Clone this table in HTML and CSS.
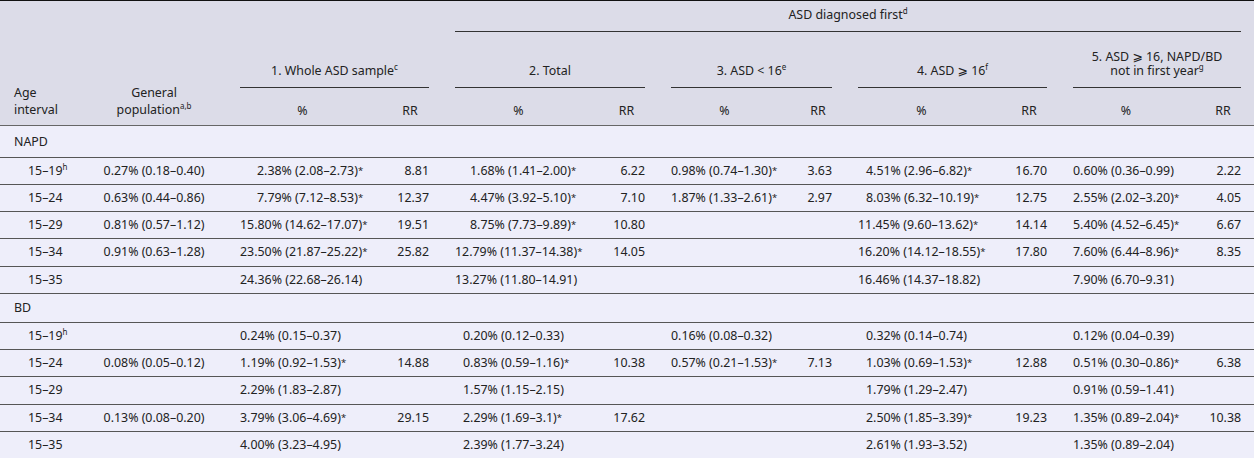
FILE: index.html
```html
<!DOCTYPE html>
<html lang="en">
<head>
<meta charset="utf-8">
<title>Risk of NAPD and BD by age interval</title>
<link rel="stylesheet" href="styles.css">
</head>
<body>
<table class="tbl">
  <colgroup>
    <col class="w-age"><col class="w-gen">
    <col class="w-c1p"><col class="w-c1r">
    <col class="w-c2p"><col class="w-c2r">
    <col class="w-c3p"><col class="w-c3r">
    <col class="w-c4p"><col class="w-c4r">
    <col class="w-c5p"><col class="w-c5r">
  </colgroup>
  <thead>
    <tr class="h1">
      <th class="stub left" rowspan="3">Age<br>interval</th>
      <th class="stub" rowspan="3">General<br>population<sup>a,b</sup></th>
      <th colspan="2"></th>
      <th class="grp" colspan="8"><div class="rule">ASD diagnosed first<sup>d</sup></div></th>
    </tr>
    <tr class="h2">
      <th class="grp" colspan="2"><div class="rule">1. Whole ASD sample<sup>c</sup></div></th>
      <th class="grp" colspan="2"><div class="rule">2. Total</div></th>
      <th class="grp" colspan="2"><div class="rule">3. ASD &lt; 16<sup>e</sup></div></th>
      <th class="grp" colspan="2"><div class="rule">4. ASD ⩾ 16<sup>f</sup></div></th>
      <th class="grp" colspan="2"><div class="rule">5. ASD ⩾ 16, NAPD/BD<br>not in first year<sup>g</sup></div></th>
    </tr>
    <tr class="h3">
      <th class="sub">%</th><th class="sub">RR</th>
      <th class="sub">%</th><th class="sub">RR</th>
      <th class="sub">%</th><th class="sub">RR</th>
      <th class="sub">%</th><th class="sub">RR</th>
      <th class="sub">%</th><th class="sub">RR</th>
    </tr>
  </thead>
  <tbody>
    <tr class="sec sec-first"><td colspan="12">NAPD</td></tr>
    <tr>
      <td class="age">15–19<sup>h</sup></td><td class="gen">0.27% (0.18–0.40)</td>
      <td class="pct s2">2.38% (2.08–2.73)<span class="ast">*</span></td><td class="rr">8.81</td>
      <td class="pct s2b">1.68% (1.41–2.00)<span class="ast">*</span></td><td class="rr">6.22</td>
      <td class="pct">0.98% (0.74–1.30)<span class="ast">*</span></td><td class="rr">3.63</td>
      <td class="pct s1">4.51% (2.96–6.82)<span class="ast">*</span></td><td class="rr">16.70</td>
      <td class="pct">0.60% (0.36–0.99)</td><td class="rr">2.22</td>
    </tr>
    <tr>
      <td class="age">15–24</td><td class="gen">0.63% (0.44–0.86)</td>
      <td class="pct s2">7.79% (7.12–8.53)<span class="ast">*</span></td><td class="rr">12.37</td>
      <td class="pct s2b">4.47% (3.92–5.10)<span class="ast">*</span></td><td class="rr">7.10</td>
      <td class="pct">1.87% (1.33–2.61)<span class="ast">*</span></td><td class="rr">2.97</td>
      <td class="pct s1">8.03% (6.32–10.19)<span class="ast">*</span></td><td class="rr">12.75</td>
      <td class="pct">2.55% (2.02–3.20)<span class="ast">*</span></td><td class="rr">4.05</td>
    </tr>
    <tr>
      <td class="age">15–29</td><td class="gen">0.81% (0.57–1.12)</td>
      <td class="pct">15.80% (14.62–17.07)<span class="ast">*</span></td><td class="rr">19.51</td>
      <td class="pct s2b">8.75% (7.73–9.89)<span class="ast">*</span></td><td class="rr">10.80</td>
      <td class="pct"></td><td class="rr"></td>
      <td class="pct">11.45% (9.60–13.62)<span class="ast">*</span></td><td class="rr">14.14</td>
      <td class="pct">5.40% (4.52–6.45)<span class="ast">*</span></td><td class="rr">6.67</td>
    </tr>
    <tr>
      <td class="age">15–34</td><td class="gen">0.91% (0.63–1.28)</td>
      <td class="pct">23.50% (21.87–25.22)<span class="ast">*</span></td><td class="rr">25.82</td>
      <td class="pct">12.79% (11.37–14.38)<span class="ast">*</span></td><td class="rr">14.05</td>
      <td class="pct"></td><td class="rr"></td>
      <td class="pct">16.20% (14.12–18.55)<span class="ast">*</span></td><td class="rr">17.80</td>
      <td class="pct">7.60% (6.44–8.96)<span class="ast">*</span></td><td class="rr">8.35</td>
    </tr>
    <tr>
      <td class="age">15–35</td><td class="gen"></td>
      <td class="pct">24.36% (22.68–26.14)</td><td class="rr"></td>
      <td class="pct">13.27% (11.80–14.91)</td><td class="rr"></td>
      <td class="pct"></td><td class="rr"></td>
      <td class="pct">16.46% (14.37–18.82)</td><td class="rr"></td>
      <td class="pct">7.90% (6.70–9.31)</td><td class="rr"></td>
    </tr>
    <tr class="sec"><td colspan="12">BD</td></tr>
    <tr>
      <td class="age">15–19<sup>h</sup></td><td class="gen"></td>
      <td class="pct">0.24% (0.15–0.37)</td><td class="rr"></td>
      <td class="pct s1">0.20% (0.12–0.33)</td><td class="rr"></td>
      <td class="pct">0.16% (0.08–0.32)</td><td class="rr"></td>
      <td class="pct s1">0.32% (0.14–0.74)</td><td class="rr"></td>
      <td class="pct">0.12% (0.04–0.39)</td><td class="rr"></td>
    </tr>
    <tr>
      <td class="age">15–24</td><td class="gen">0.08% (0.05–0.12)</td>
      <td class="pct">1.19% (0.92–1.53)<span class="ast">*</span></td><td class="rr">14.88</td>
      <td class="pct s1">0.83% (0.59–1.16)<span class="ast">*</span></td><td class="rr">10.38</td>
      <td class="pct">0.57% (0.21–1.53)<span class="ast">*</span></td><td class="rr">7.13</td>
      <td class="pct s1">1.03% (0.69–1.53)<span class="ast">*</span></td><td class="rr">12.88</td>
      <td class="pct">0.51% (0.30–0.86)<span class="ast">*</span></td><td class="rr">6.38</td>
    </tr>
    <tr>
      <td class="age">15–29</td><td class="gen"></td>
      <td class="pct">2.29% (1.83–2.87)</td><td class="rr"></td>
      <td class="pct s1">1.57% (1.15–2.15)</td><td class="rr"></td>
      <td class="pct"></td><td class="rr"></td>
      <td class="pct s1">1.79% (1.29–2.47)</td><td class="rr"></td>
      <td class="pct">0.91% (0.59–1.41)</td><td class="rr"></td>
    </tr>
    <tr>
      <td class="age">15–34</td><td class="gen">0.13% (0.08–0.20)</td>
      <td class="pct">3.79% (3.06–4.69)<span class="ast">*</span></td><td class="rr">29.15</td>
      <td class="pct s1">2.29% (1.69–3.1)<span class="ast">*</span></td><td class="rr">17.62</td>
      <td class="pct"></td><td class="rr"></td>
      <td class="pct s1">2.50% (1.85–3.39)<span class="ast">*</span></td><td class="rr">19.23</td>
      <td class="pct">1.35% (0.89–2.04)<span class="ast">*</span></td><td class="rr">10.38</td>
    </tr>
    <tr>
      <td class="age">15–35</td><td class="gen"></td>
      <td class="pct">4.00% (3.23–4.95)</td><td class="rr"></td>
      <td class="pct s1">2.39% (1.77–3.24)</td><td class="rr"></td>
      <td class="pct"></td><td class="rr"></td>
      <td class="pct s1">2.61% (1.93–3.52)</td><td class="rr"></td>
      <td class="pct">1.35% (0.89–2.04)</td><td class="rr"></td>
    </tr>
  </tbody>
</table>
</body>
</html>
```

FILE: styles.css
```css
* { box-sizing: border-box; }
html, body { margin: 0; padding: 0; background: #ffffff; }
body {
  font-family: "Noto Sans", "DejaVu Sans", sans-serif;
  font-size: 12.4px;
  color: #222222;
}
.tbl {
  width: 1254px;
  table-layout: fixed;
  border-collapse: collapse;
  border-top: 1px solid #111111;
  border-bottom: 1px solid #111111;
}
.w-age { width: 81px; }
.w-gen { width: 146px; }
.w-c1p { width: 151px; }
.w-c1r { width: 64px; }
.w-c2p { width: 153px; }
.w-c2r { width: 63px; }
.w-c3p { width: 133px; }
.w-c3r { width: 54px; }
.w-c4p { width: 153px; }
.w-c4r { width: 62px; }
.w-c5p { width: 132px; }
.w-c5r { width: 62px; }

sup {
  font-size: 8px;
  line-height: 0;
  vertical-align: 5px;
}
.ast {
  font-size: 9.5px;
  line-height: 0;
  vertical-align: 1px;
}

thead th {
  background: #dcdce8;
  font-weight: normal;
  padding: 0 13px;
  line-height: 14.4px;
  vertical-align: bottom;
  text-align: center;
}
thead tr.h3 th,
thead th.stub { border-bottom: 1px solid #666666; }
.h1 { height: 31px; }
.h2 { height: 56px; }
.h3 { height: 38px; }
.rule {
  padding-bottom: 8px;
  border-bottom: 1px solid #333333;
}
.stub {
  line-height: 16.5px;
  padding-bottom: 7px;
}
.stub.left { text-align: left; padding-left: 14px; }
.sub { padding-bottom: 7px; }

tbody td {
  background: #eeeefa;
  padding: 6px 13px;
  line-height: 14.2px;
  border-bottom: 1px solid #555555;
  white-space: nowrap;
}
tbody tr.sec td {
  padding: 7px 14px;
}
tbody tr.sec-first td {
  padding-top: 9px;
  padding-bottom: 7.5px;
}
tbody td.age { padding-left: 28px; }
.gen { text-align: center; }
.pct { text-align: left; }
.rr { text-align: right; }
.s1 { text-indent: 8px; }
.s2 { text-indent: 17px; }
.s2b { text-indent: 15px; }
```
